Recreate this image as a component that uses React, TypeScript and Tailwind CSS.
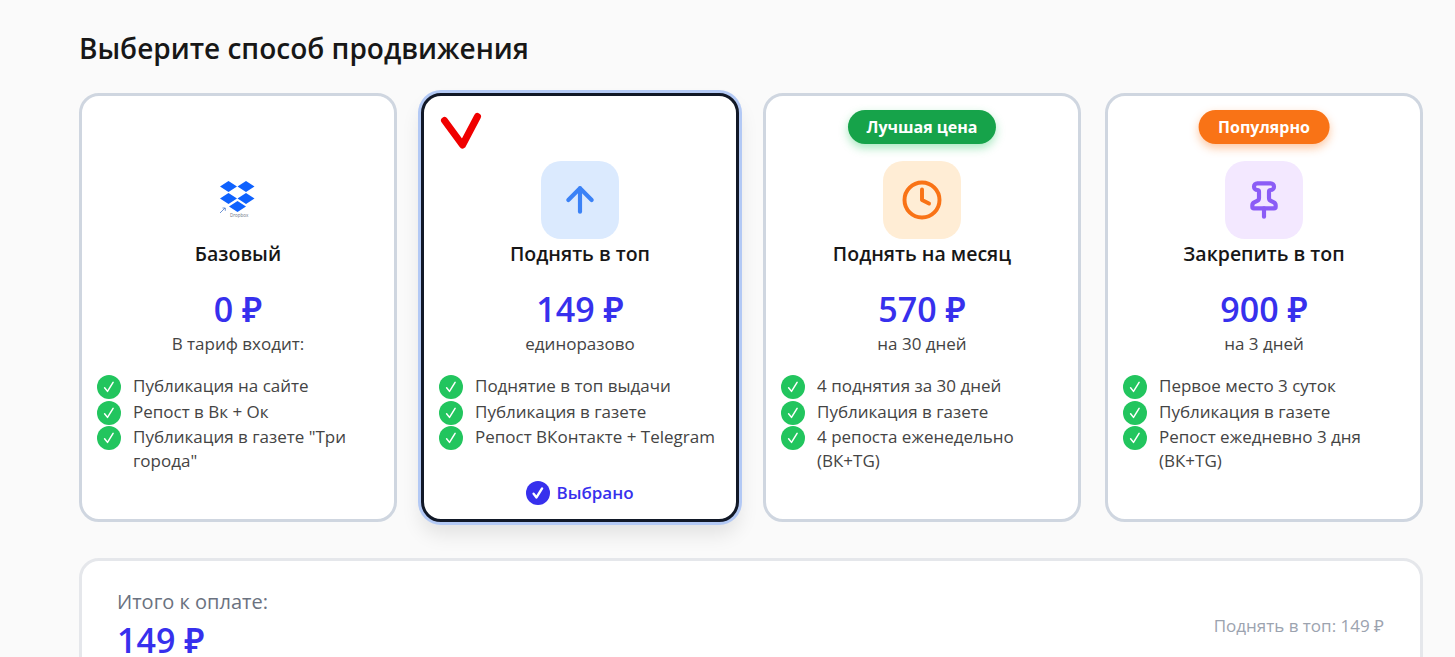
import { ArrowUp, Clock, Pin } from "lucide-react";
import type { ReactNode } from "react";

function Check({ className, weight = 1.5 }: { className: string; weight?: number }) {
  return (
    <span className={`flex shrink-0 items-center justify-center rounded-full ${className}`}>
      <svg width="24" height="24" viewBox="0 0 24 24" fill="none">
        <path d="M7.6 12.8l2.9 3.6 5.6-9" stroke="white" strokeWidth={weight} strokeLinecap="round" strokeLinejoin="round" />
      </svg>
    </span>
  );
}

function Dropbox() {
  return (
    <div className="relative h-[44px] w-[44px]">
      <svg width="44" height="44" viewBox="0 0 44 44">
        <path d="M12.5 3l8.5 5.5-8.5 5.5-8.5-5.5z M30 3l8.5 5.5-8.5 5.5-8.5-5.5z M12.5 15l8.5 5.5-8.5 5.5-8.5-5.5z M30 15l8.5 5.5-8.5 5.5-8.5-5.5z M21.5 23l8.5 5.5-8.5 5.5-8.5-5.5z" fill="#0f62fe" />
        <path d="M4 35l5-5 M6.5 30h2.8v2.8" stroke="#4a78c8" strokeWidth="0.8" fill="none" />
      </svg>
      <span className="absolute left-[14px] top-[35px] text-[4.5px] leading-[5px] text-gray-500">Dropbox</span>
    </div>
  );
}

type CardData = {
  icon: ReactNode;
  title: string;
  price: string;
  sub: string;
  items: string[];
  badge?: { label: string; cls: string };
  selected?: boolean;
};

const cards: CardData[] = [
  {
    icon: <Dropbox />,
    title: "Базовый",
    price: "0 ₽",
    sub: "В тариф входит:",
    items: ["Публикация на сайте", "Репост в Вк + Ок", 'Публикация в газете "Три города"'],
  },
  {
    icon: (
      <div className="flex h-[78px] w-[78px] items-center justify-center rounded-[20px] bg-[#dbeafe]">
        <ArrowUp size={40} strokeWidth={2.5} className="text-[#3b82f6]" />
      </div>
    ),
    title: "Поднять в топ",
    price: "149 ₽",
    sub: "единоразово",
    items: ["Поднятие в топ выдачи", "Публикация в газете", "Репост ВКонтакте + Telegram"],
    selected: true,
  },
  {
    icon: (
      <div className="flex h-[78px] w-[78px] items-center justify-center rounded-[20px] bg-[#ffedd5]">
        <Clock size={42} strokeWidth={2.25} className="text-[#f97316]" />
      </div>
    ),
    title: "Поднять на месяц",
    price: "570 ₽",
    sub: "на 30 дней",
    items: ["4 поднятия за 30 дней", "Публикация в газете", "4 репоста еженедельно (ВК+TG)"],
    badge: { label: "Лучшая цена", cls: "bg-[#16a34a] shadow-[0_4px_10px_rgba(34,197,94,0.4)] px-[18.5px]" },
  },
  {
    icon: (
      <div className="flex h-[78px] w-[78px] items-center justify-center rounded-[20px] bg-[#f3e8ff]">
        <Pin size={40} strokeWidth={2.5} className="text-[#8b5cf6]" />
      </div>
    ),
    title: "Закрепить в топ",
    price: "900 ₽",
    sub: "на 3 дней",
    items: ["Первое место 3 суток", "Публикация в газете", "Репост ежедневно 3 дня (ВК+TG)"],
    badge: { label: "Популярно", cls: "bg-[#f97316] shadow-[0_4px_10px_rgba(249,115,22,0.4)] px-[19.5px]" },
  },
];

function Card({ c }: { c: CardData }) {
  return (
    <div
      className={`relative flex h-[429px] flex-col items-center rounded-[20px] border-[3px] bg-white px-[15px] pt-[65px] ${
        c.selected
          ? "border-[#111827] shadow-[0_0_0_3px_#b3c9f5,0_12px_20px_rgba(0,0,0,0.1)]"
          : "border-[#cfd6e0]"
      }`}
    >
      {c.selected && (
        <svg className="absolute left-[15px] top-[14px]" width="46" height="42" viewBox="0 0 46 42" fill="none">
          <path d="M5.5 10.5l18 24.5L38.5 6.5" stroke="#f00000" strokeWidth="7" strokeLinecap="round" strokeLinejoin="round" />
        </svg>
      )}
      {c.badge && (
        <div
          className={`absolute left-1/2 top-[14px] -translate-x-1/2 whitespace-nowrap rounded-full py-[7px] text-[16px] font-bold leading-[20px] text-white ${c.badge.cls}`}
        >
          {c.badge.label}
        </div>
      )}
      <div className="flex h-[78px] items-center justify-center">{c.icon}</div>
      <div className="mt-[1px] text-[19.5px] font-semibold leading-[28px] text-[#171717]">{c.title}</div>
      <div className="mt-[21px] text-[34px] font-semibold leading-[40px] text-[#3730ed]">{c.price}</div>
      <div className="mt-[3px] text-[17px] leading-[24px] text-[#444444]">{c.sub}</div>
      <ul className="mt-[19px] flex w-full flex-col gap-[1.5px]">
        {c.items.map((t) => (
          <li key={t} className="flex items-start gap-[12px] text-[17px] leading-[24px] text-[#444444]">
            <Check className="h-[24px] w-[24px] bg-[#22c55e]" />
            <span className="-mt-[1px]">{t}</span>
          </li>
        ))}
      </ul>
      {c.selected && (
        <div className="absolute bottom-[14px] left-0 right-0 flex items-center justify-center gap-[6px] text-[17px] font-semibold leading-[24px] text-[#3730ed]">
          <Check className="h-[24px] w-[24px] bg-[#3730ed]" weight={2.4} />
          <span>Выбрано</span>
        </div>
      )}
    </div>
  );
}

export default function App() {
  return (
    <div className="h-[657px] overflow-hidden bg-[#fafafa] pl-[79px] pr-[32px] pt-[28px] font-['Open_Sans','Noto_Sans',sans-serif]">
      <h1 className="text-[28px] font-semibold leading-[40px] text-[#171717]">Выберите способ продвижения</h1>
      <div className="mt-[25px] grid grid-cols-4 gap-[24px]">
        {cards.map((c) => (
          <Card key={c.title} c={c} />
        ))}
      </div>
      <div className="mt-[36px] flex items-start justify-between rounded-[20px] border-[3px] border-[#e5e7eb] bg-white px-[35px] pb-[30px] pt-[27px]">
        <div>
          <div className="text-[20px] leading-[28px] text-[#6b7280]">Итого к оплате:</div>
          <div className="mt-[4px] text-[34px] font-semibold leading-[40px] text-[#3730ed]">149 ₽</div>
        </div>
        <div className="mt-[26px] mr-[1px] text-[17px] leading-[24px] text-[#9ca3af]">Поднять в топ: 149 ₽</div>
      </div>
    </div>
  );
}
